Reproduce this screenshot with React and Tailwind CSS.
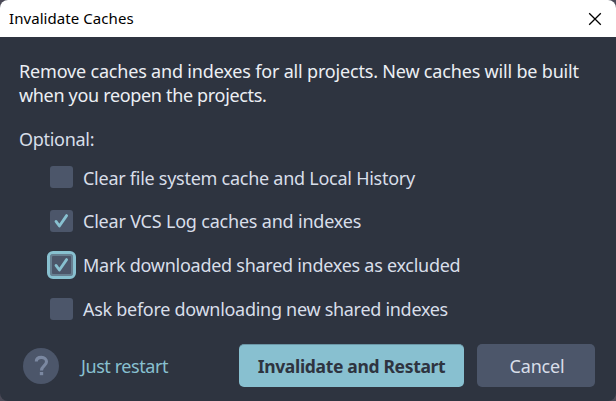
const font = "font-['Noto_Sans',sans-serif]";

function Checkbox({ checked, focused }) {
  return (
    <span
      className={`flex h-[22px] w-[23px] shrink-0 items-center justify-center rounded-[3px] bg-[#4c566a] ${
        focused ? 'outline-[3px] outline-[#88c0d0] ring-2 ring-inset ring-[#677f91]' : ''
      }`}
    >
      {checked && (
        <svg width="23" height="22" viewBox="0 0 23 22" fill="none">
          <path d="M6 11.4 L9.4 16 L16.6 5.6" stroke="#88c0d0" strokeWidth="2.8" strokeLinecap="round" strokeLinejoin="round" />
        </svg>
      )}
    </span>
  );
}

const options = [
  { label: 'Clear file system cache and Local History', spacing: 'pt-[2px] tracking-[-0.26px]' },
  { label: 'Clear VCS Log caches and indexes', spacing: 'tracking-[-0.2px]', checked: true },
  { label: 'Mark downloaded shared indexes as excluded', spacing: 'tracking-[-0.27px]', checked: true, focused: true },
  { label: 'Ask before downloading new shared indexes', spacing: 'tracking-[-0.29px]' },
];

export default function App() {
  return (
    <div className="h-[401px] w-[616px] overflow-hidden bg-[#4b4a57]">
      <div className={`${font} flex h-full flex-col overflow-hidden rounded-[8px] bg-[#2e3440] text-[18px] text-[#d8dee9]`}>
        <header className="flex h-[37px] shrink-0 items-center justify-between bg-white pl-[9px] pr-[14px] text-black">
          <h1 className="whitespace-nowrap pb-[2px] text-[15px] leading-[20px] tracking-[0.07px]">Invalidate Caches</h1>
          <svg width="14" height="14" viewBox="0 0 14 14" fill="none" stroke="#000" strokeWidth="1.3">
            <path d="M1.2 1.2 L12.8 12.8 M12.8 1.2 L1.2 12.8" />
          </svg>
        </header>
        <main className="flex flex-col pl-[19px] pt-[22px]">
          <p className="whitespace-nowrap leading-[24px] text-[#eceff4]">
            <span className="tracking-[-0.18px]">Remove caches and indexes for all projects. New caches will be built</span>
            <br />
            <span className="tracking-[-0.33px]">when you reopen the projects.</span>
          </p>
          <p className="mt-[20px] leading-[24px] tracking-[-0.3px]">Optional:</p>
          <div className="mt-[15px] flex flex-col gap-[22px] pl-[31px]">
            {options.map((o) => (
              <label key={o.label} className="flex h-[22px] items-center gap-[10px]">
                <Checkbox checked={o.checked} focused={o.focused} />
                <span className={`whitespace-nowrap leading-[24px] ${o.spacing}`}>{o.label}</span>
              </label>
            ))}
          </div>
        </main>
        <footer className="mt-[24px] flex h-[43px] shrink-0 items-center pl-[23px]">
          <button className="flex size-[36px] items-center justify-center rounded-full bg-[#4c566a]">
            <svg width="36" height="36" viewBox="0 0 36 36" fill="none">
              <path d="M13.3 13.6 C13.3 10.9 15.5 9.4 18.4 9.4 C21.4 9.4 23.5 11.1 23.5 13.7 C23.5 17.5 18.5 17.8 18.5 22.6" stroke="#7b88a1" strokeWidth="3.1" />
              <rect x="16.8" y="24" width="3.4" height="3.2" fill="#7b88a1" />
            </svg>
          </button>
          <a className="ml-[22px] w-[158px] whitespace-nowrap pt-[2px] tracking-[-0.43px] text-[#88c0d0]">Just restart</a>
          <button className="h-[43px] w-[225px] whitespace-nowrap rounded-[5px] border-t border-[#6b96a6] bg-[#88c0d0] pt-px text-[17.5px] font-bold tracking-[-0.33px] text-[#2e3440]">
            Invalidate and Restart
          </button>
          <button className="ml-[13px] h-[43px] w-[118px] rounded-[5px] bg-[#4c566a] pl-[2px] pt-[2px] tracking-[-0.2px]">Cancel</button>
        </footer>
      </div>
    </div>
  );
}
